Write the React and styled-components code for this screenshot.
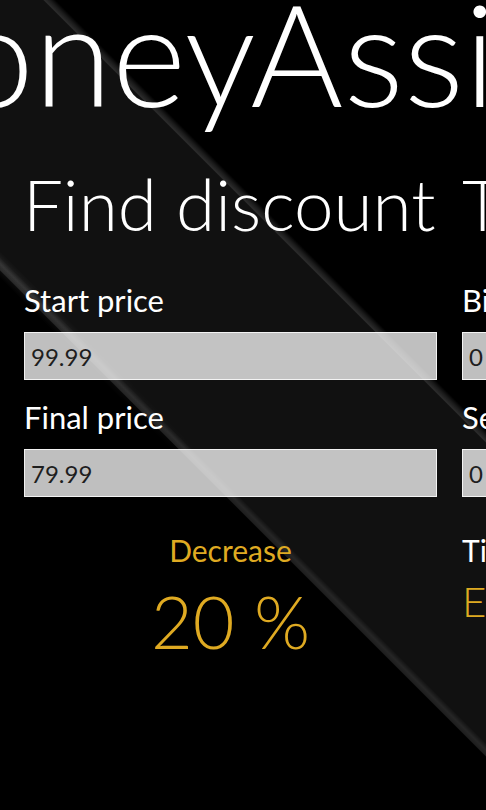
import React from 'react'
import styled, { createGlobalStyle } from 'styled-components'

const ACCENT = '#dfaa22'

const GlobalStyle = createGlobalStyle`
  html, body {
    margin: 0;
    padding: 0;
    background: #000;
  }
  body {
    font-family: Lato, "Open Sans", sans-serif;
  }
`

const Screen = styled.div`
  position: relative;
  width: 486px;
  height: 810px;
  overflow: hidden;
  color: #fff;
  background: linear-gradient(
    45deg,
    #000 0px,
    #000 381px,
    #1e1e1e 382px,
    #262626 386px,
    #1a1a1a 389px,
    #111 391px,
    #111 603px,
    #2c2c2c 604px,
    #1a1a1a 608px,
    #000 612px,
    #000 100%
  );

  &::before {
    content: '';
    position: absolute;
    inset: 0;
    background: linear-gradient(
      45deg,
      transparent 376px,
      rgba(255, 255, 255, 0.05) 382px,
      rgba(255, 255, 255, 0.08) 387px,
      rgba(255, 255, 255, 0.03) 392px,
      transparent 396px
    );
    -webkit-mask-image: linear-gradient(135deg, #000 20%, transparent 60%);
    mask-image: linear-gradient(135deg, #000 20%, transparent 60%);
  }
`

const Content = styled.div`
  position: relative;
  z-index: 1;
`

const Title = styled.h1`
  margin: -19px 0 0 -172px;
  font: 300 142px/1 Lato, sans-serif;
  white-space: nowrap;
`

const Panorama = styled.div`
  display: flex;
  gap: 25px;
  padding-left: 24px;
  margin-top: 45px;
`

const Item = styled.section`
  flex: 0 0 413px;
  display: flex;
  flex-direction: column;
`

const Header = styled.h2`
  margin: 0 0 0 ${(p) => p.$offset || 0}px;
  font: 300 71px/1 Lato, sans-serif;
  white-space: nowrap;
`

const Form = styled.div`
  display: flex;
  flex-direction: column;
  margin-top: 46px;
`

const Field = styled.div`
  display: flex;
  flex-direction: column;
  gap: 16px;
  & + & {
    margin-top: 22px;
  }
`

const Label = styled.label`
  font: 400 31px/1 Lato, sans-serif;
  white-space: nowrap;
`

const TextBox = styled.input`
  box-sizing: border-box;
  width: 100%;
  height: 48px;
  margin: 0;
  padding: 0 6px;
  border: 1px solid rgba(255, 255, 255, 0.8);
  border-radius: 0;
  background: rgba(255, 255, 255, 0.75);
  color: #1e1e1e;
  font: 400 24px/1 Lato, sans-serif;
  outline: none;
`

const Result = styled.div`
  display: flex;
  flex-direction: column;
  align-items: ${(p) => (p.$center ? 'center' : 'flex-start')};
  margin-top: 38px;
`

const ResultLabel = styled.div`
  color: ${(p) => (p.$accent ? ACCENT : '#fff')};
  font: 400 30px/1 Lato, sans-serif;
  white-space: nowrap;
`

const ResultValue = styled.div`
  color: ${ACCENT};
  font: 300 ${(p) => p.$size}px/1 Lato, sans-serif;
  margin-top: ${(p) => p.$gap}px;
  white-space: nowrap;
`

export default function App() {
  return (
    <>
      <GlobalStyle />
      <Screen>
        <Content>
          <Title>MoneyAssistant</Title>
          <Panorama>
            <Item>
              <Header $offset={-1}>Find discount</Header>
              <Form>
                <Field>
                  <Label>Start price</Label>
                  <TextBox defaultValue="99.99" />
                </Field>
                <Field>
                  <Label>Final price</Label>
                  <TextBox defaultValue="79.99" />
                </Field>
              </Form>
              <Result $center>
                <ResultLabel $accent>Decrease</ResultLabel>
                <ResultValue $size={72} $gap={20}>20 %</ResultValue>
              </Result>
            </Item>
            <Item>
              <Header $offset={0}>Tip calculator</Header>
              <Form>
                <Field>
                  <Label>Bill amount</Label>
                  <TextBox defaultValue="0" />
                </Field>
                <Field>
                  <Label>Service quality</Label>
                  <TextBox defaultValue="0" />
                </Field>
              </Form>
              <Result>
                <ResultLabel>Tip per person</ResultLabel>
                <ResultValue $size={42} $gap={15}>Excellent</ResultValue>
              </Result>
            </Item>
          </Panorama>
        </Content>
      </Screen>
    </>
  )
}
